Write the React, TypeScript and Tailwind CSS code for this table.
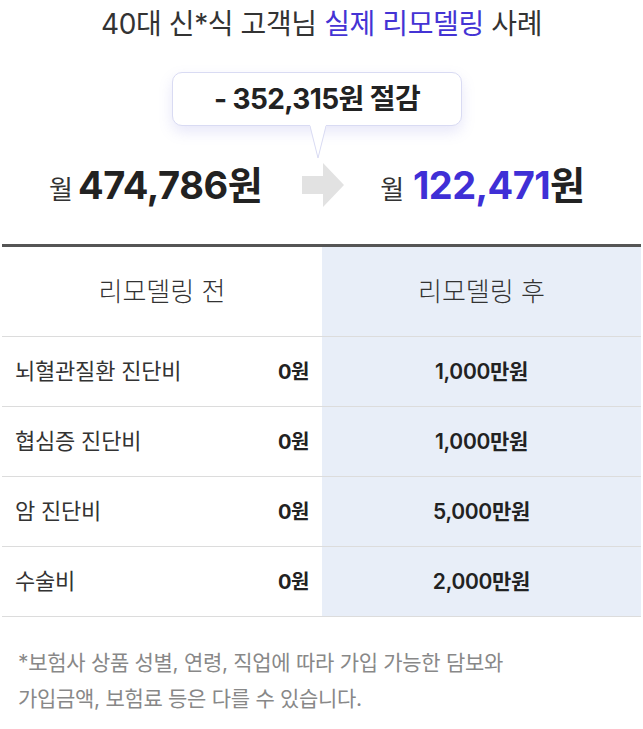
import React from "react";

const rows = [
  { name: "뇌혈관질환 진단비", before: "0원", after: "1,000만원" },
  { name: "협심증 진단비", before: "0원", after: "1,000만원" },
  { name: "암 진단비", before: "0원", after: "5,000만원" },
  { name: "수술비", before: "0원", after: "2,000만원" },
];

export default function App() {
  return (
    <div
      className="w-[643px] h-[729px] bg-white text-[#222] overflow-hidden"
      style={{ fontFamily: 'Inter, "Noto Sans CJK KR", "Noto Sans", sans-serif' }}
    >
      <h1 className="pt-[7px] text-center text-[28px] leading-[34px] font-normal tracking-[-0.4px] text-[#333]">
        40대 신*식 고객님 <span className="text-[#4433d4]">실제 리모델링</span> 사례
      </h1>

      <div className="relative h-[203px]">
        {/* speech bubble */}
        <div className="absolute left-[172px] top-[31px] w-[290px] h-[54px] rounded-[10px] border border-[#d9dbf3] bg-white shadow-[0_6px_14px_rgba(120,120,220,0.18)] flex items-center justify-center">
          <span className="text-[28px] font-bold tracking-[-0.6px] text-[#222]">- 352,315원 절감</span>
          <svg className="absolute left-[137px] top-[52px]" width="16" height="34" viewBox="0 0 16 34">
            <path d="M0 0 L8 33 L16 0 Z" fill="white" />
            <path d="M0 1 L8 33 L16 1" fill="none" stroke="#d9dbf3" strokeWidth="1" />
          </svg>
        </div>

        {/* arrow */}
        <svg className="absolute left-[302px] top-[122px]" width="42" height="44" viewBox="0 0 42 44">
          <path d="M0 13 H21 V0 L42 22 L21 44 V31 H0 Z" fill="#e2e2e2" />
        </svg>

        <div className="absolute left-0 right-0 top-[116px] flex">
          <div className="w-1/2 flex items-baseline justify-center gap-[5px] pr-[10px]">
            <span className="text-[26px] text-[#333]">월</span>
            <span className="text-[38px] font-bold tracking-[-0.4px] text-[#222]">474,786원</span>
          </div>
          <div className="w-1/2 flex items-baseline justify-center gap-[9px]">
            <span className="text-[26px] text-[#333]">월</span>
            <span className="text-[38px] font-bold tracking-[-0.6px] text-[#222]">
              <span className="text-[#3f2fd6]">122,471</span>원
            </span>
          </div>
        </div>
      </div>

      <div className="mx-[2px] border-t-[3px] border-[#555]">
        <div className="flex h-[90px] border-b border-[#dcdcdc]">
          <div className="w-[320px] flex items-center justify-center text-[26px] font-light text-[#333]">
            리모델링 전
          </div>
          <div className="flex-1 bg-[#e8eef8] flex items-center justify-center text-[26px] font-light text-[#333]">
            리모델링 후
          </div>
        </div>
        {rows.map((r) => (
          <div key={r.name} className="flex h-[70px] border-b border-[#dcdcdc]">
            <div className="w-[320px] flex items-center justify-between pl-[13px] pr-[13px]">
              <span className="text-[22px] tracking-[-0.2px] text-[#333]">{r.name}</span>
              <span className="text-[20px] font-bold tracking-[-0.5px] text-[#222]">{r.before}</span>
            </div>
            <div className="flex-1 bg-[#e8eef8] flex items-center justify-center text-[21px] font-semibold tracking-[-0.3px] text-[#222]">
              {r.after}
            </div>
          </div>
        ))}
      </div>

      <p className="pl-[18px] pt-[28px] text-[21px] leading-[36px] text-[#888] tracking-[-0.3px]">
        *보험사 상품 성별, 연령, 직업에 따라 가입 가능한 담보와
        <br />
        가입금액, 보험료 등은 다를 수 있습니다.
      </p>
    </div>
  );
}
